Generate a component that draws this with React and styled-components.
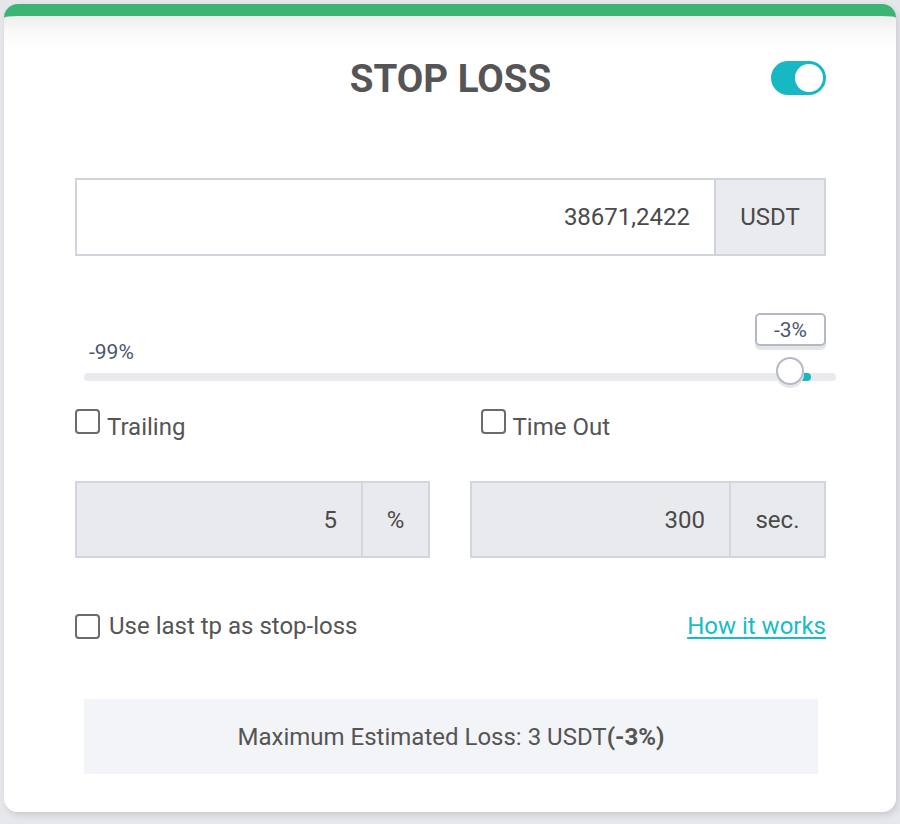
import styled, { createGlobalStyle } from "styled-components";

const GlobalStyle = createGlobalStyle`
  html, body {
    margin: 0;
    padding: 0;
    background: #e6e7ea;
    font-family: Roboto, "Liberation Sans", sans-serif;
  }
  * { box-sizing: border-box; }
`;

function Checkbox({ label, indent, drop }) {
  return (
    <CheckRow $indent={indent} $drop={drop}>
      <Box />
      <CheckLabel $drop={drop}>{label}</CheckLabel>
    </CheckRow>
  );
}

function AddonInput({ value, unit, unitWidth, disabled }) {
  return (
    <InputGroup $disabled={disabled}>
      <Value>{value}</Value>
      <Addon $width={unitWidth}>{unit}</Addon>
    </InputGroup>
  );
}

export default function App() {
  const thumbPos = 706;
  return (
    <Page>
      <GlobalStyle />
      <Card>
        <Header>
          <span />
          <Title>STOP LOSS</Title>
          <Toggle>
            <Knob />
          </Toggle>
        </Header>

        <MainInput>
          <MainValue>38671,2422</MainValue>
          <MainAddon>USDT</MainAddon>
        </MainInput>

        <SliderBlock>
          <MinLabel>-99%</MinLabel>
          <Track>
            <Fill style={{ left: thumbPos + 12 }} />
            <Thumb style={{ left: thumbPos - 14 }} />
            <Bubble style={{ left: thumbPos - 35 }}>-3%</Bubble>
          </Track>
        </SliderBlock>

        <Columns>
          <Checkbox label="Trailing" drop />
          <Checkbox label="Time Out" indent drop />
        </Columns>

        <InputsRow>
          <AddonInput value="5" unit="%" unitWidth={67} disabled />
          <AddonInput value="300" unit="sec." unitWidth={95} disabled />
        </InputsRow>

        <OptionRow>
          <Checkbox label="Use last tp as stop-loss" />
          <HelpLink href="#">How it works</HelpLink>
        </OptionRow>

        <Summary>
          Maximum Estimated Loss: 3 USDT<b>(-3%)</b>
        </Summary>
      </Card>
    </Page>
  );
}

const Page = styled.div`
  padding: 4px 4px 12px 4px;
  min-height: 824px;
`;

const Card = styled.div`
  width: 892px;
  height: 808px;
  border-radius: 14px;
  border-top: 12px solid #3db374;
  background: linear-gradient(#eeeeee 0px, #fafafa 18px, #ffffff 34px);
  box-shadow: 2px 3px 6px rgba(0, 0, 0, 0.12);
  padding: 32px 70px 0 71px;
  display: flex;
  flex-direction: column;
`;

const Header = styled.div`
  display: grid;
  grid-template-columns: 1fr auto 1fr;
  align-items: center;
  height: 60px;
`;

const Title = styled.h1`
  margin: 0;
  font-size: 38.5px;
  font-weight: 700;
  color: #555555;
`;

const Toggle = styled.div`
  justify-self: end;
  width: 55px;
  height: 34px;
  border-radius: 17px;
  background: #15b8c3;
  padding: 3px;
  display: flex;
  justify-content: flex-end;
`;

const Knob = styled.div`
  width: 28px;
  height: 28px;
  border-radius: 50%;
  background: #ffffff;
`;

const MainInput = styled.div`
  margin-top: 70px;
  height: 78px;
  display: flex;
  border: 2px solid #d1d4db;
`;

const MainValue = styled.div`
  flex: 1;
  display: flex;
  align-items: center;
  justify-content: flex-end;
  padding-right: 24px;
  font-size: 24px;
  color: #4a4a4a;
  background: #ffffff;
`;

const MainAddon = styled.div`
  width: 110px;
  display: flex;
  align-items: center;
  justify-content: center;
  border-left: 2px solid #d1d4db;
  background: #eaebef;
  font-size: 24px;
  color: #4a4a4a;
`;

const SliderBlock = styled.div`
  margin: 84px -10px 0 9px;
`;

const MinLabel = styled.div`
  margin-left: 5px;
  font-size: 21px;
  line-height: 24px;
  color: #4a5670;
`;

const Track = styled.div`
  position: relative;
  margin-top: 9px;
  height: 8px;
  border-radius: 4px;
  background: #e9eaee;
`;

const Fill = styled.div`
  position: absolute;
  top: 0;
  width: 9px;
  height: 8px;
  border-radius: 0 4px 4px 0;
  background: #15b8c3;
`;

const Thumb = styled.div`
  position: absolute;
  top: -16px;
  width: 28px;
  height: 28px;
  border-radius: 50%;
  background: #ffffff;
  border: 2px solid #b4bac5;
  box-shadow: 0 3px 0 #e6e7ea;
`;

const Bubble = styled.div`
  position: absolute;
  top: -60px;
  width: 71px;
  height: 33px;
  border: 2px solid #b4bac5;
  border-radius: 5px;
  background: #ffffff;
  box-shadow: 0 4px 0 #e4e5e8;
  display: flex;
  align-items: center;
  justify-content: center;
  font-size: 21px;
  color: #4a5670;
`;

const Columns = styled.div`
  margin-top: 28px;
  display: grid;
  grid-template-columns: 1fr 1fr;
  column-gap: 40px;
`;

const CheckRow = styled.label`
  display: flex;
  align-items: ${(p) => (p.$drop ? "flex-start" : "center")};
  gap: ${(p) => (p.$drop ? "7px" : "9px")};
  margin-left: ${(p) => (p.$indent ? "10px" : "0")};
`;

const Box = styled.span`
  width: 25px;
  height: 25px;
  border: 2px solid #6b6b6b;
  border-radius: 4px;
  background: #ffffff;
  flex: none;
`;

const CheckLabel = styled.span`
  font-size: 24px;
  color: #555555;
  line-height: 30px;
  padding-top: ${(p) => (p.$drop ? "3px" : "0")};
`;

const InputsRow = styled.div`
  margin-top: 39px;
  display: grid;
  grid-template-columns: 355px 356px;
  column-gap: 40px;
`;

const InputGroup = styled.div`
  height: 77px;
  display: flex;
  border: 2px solid #d2d6dc;
  background: ${(p) => (p.$disabled ? "#e9eaee" : "#ffffff")};
`;

const Value = styled.div`
  flex: 1;
  display: flex;
  align-items: center;
  justify-content: flex-end;
  padding-right: 24px;
  font-size: 24px;
  color: #4a4a4a;
`;

const Addon = styled.div`
  width: ${(p) => p.$width}px;
  display: flex;
  align-items: center;
  justify-content: center;
  border-left: 2px solid #d2d6dc;
  font-size: 24px;
  color: #4a4a4a;
`;

const OptionRow = styled.div`
  margin-top: 53px;
  display: flex;
  align-items: center;
  justify-content: space-between;
`;

const HelpLink = styled.a`
  font-size: 24px;
  color: #17bcc8;
  text-decoration: underline;
  text-underline-offset: 3px;
`;

const Summary = styled.div`
  margin: 58px 8px 0 9px;
  height: 75px;
  background: #f3f4f7;
  display: flex;
  align-items: center;
  justify-content: center;
  font-size: 24px;
  color: #555555;

  b {
    font-weight: 700;
  }
`;
